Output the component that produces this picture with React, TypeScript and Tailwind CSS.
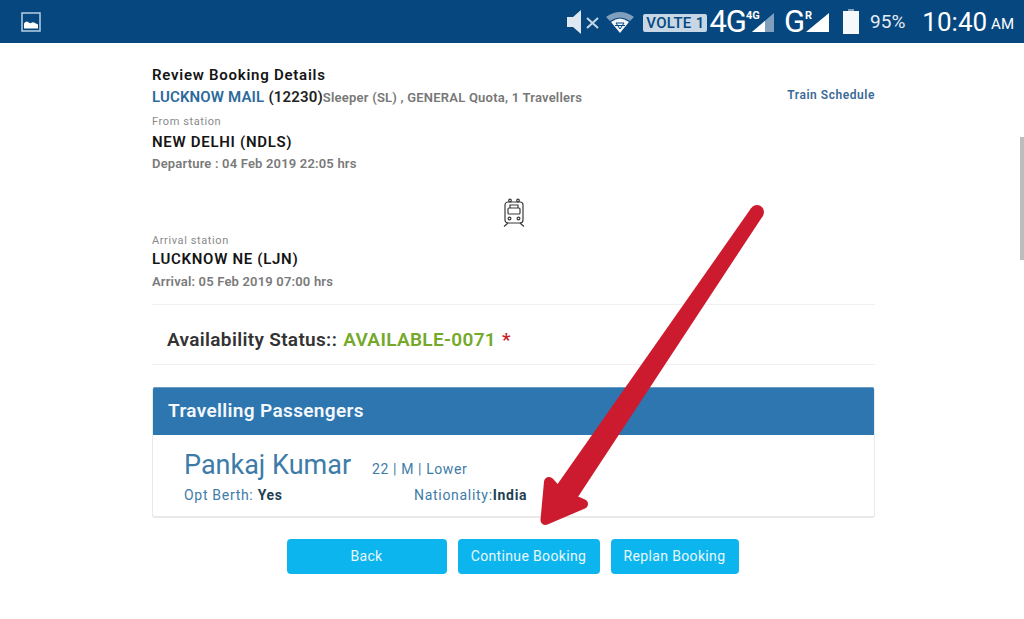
import React from "react"

const StatusBar = () => (
  <div className="h-[43px] bg-[#06477f] flex items-center text-white pl-[21px] pr-[10px]">
    <svg width="20" height="20" viewBox="0 0 20 20" className="mt-[1px]">
      <rect x="1" y="1" width="18" height="18" fill="none" stroke="#b9d0e4" strokeWidth="1.5" />
      <path d="M3 16.5 V11.5 Q5 8.5 7 10 Q8.5 11.5 10 11 Q12 9.5 14 11 L17 12.5 V16.5 Z" fill="#fff" />
    </svg>
    <div className="ml-auto flex items-center">
      <svg width="34" height="28" viewBox="0 0 34 28">
        <path d="M1 9 H7 L15 2 V26 L7 19 H1 Z" fill="#dfe8f0" />
        <path d="M21 10 L32 20 M32 10 L21 20" stroke="#c6d6e4" strokeWidth="2" />
      </svg>
      <svg width="30" height="24" viewBox="0 0 30 24" className="ml-[5px]">
        <path d="M1 7 Q15 -3 29 7 L25 11 Q15 4 5 11 Z" fill="#7f9fbd" />
        <path d="M6 12 Q15 5 24 12 L15 23 Z" fill="#f2f6f9" />
        <path d="M11 13 H19 L15 19 Z M10 15.5 H20" fill="none" stroke="#06477f" strokeWidth="1" />
      </svg>
      <span className="ml-[8px] h-[18px] w-[64px] mt-[3px] text-center bg-[#c7d7e6] text-[#06477f] rounded-[2px] text-[15px] leading-[18px] font-medium tracking-[0.3px] whitespace-nowrap">VOLTE 1</span>
      <span className="ml-[2px] text-[31px] leading-none tracking-[-1px]">4G</span>
      <span className="relative w-[28px] h-[24px]">
        <svg width="28" height="24" viewBox="0 0 28 24" className="absolute left-0 top-0">
          <path d="M28 3 V22 H6 Z" fill="#7f9fbd" />
          <path d="M19 11 V22 H6 Z" fill="#fff" />
        </svg>
        <span className="absolute left-0 top-0 text-[11px] leading-none font-bold">4G</span>
      </span>
      <span className="ml-[10px] text-[31px] leading-none">G</span>
      <span className="relative w-[25px] h-[24px]">
        <svg width="25" height="24" viewBox="0 0 25 24" className="absolute left-0 top-0">
          <path d="M24 3 V22 H1 Z" fill="#fff" />
        </svg>
        <span className="absolute left-0 top-0 text-[11px] leading-none font-bold">R</span>
      </span>
      <svg width="16" height="25" viewBox="0 0 16 25" className="ml-[13px]">
        <rect x="5" y="0" width="6" height="3" fill="#7f9fbd" />
        <rect x="0" y="2" width="16" height="23" fill="#f6f9fb" />
      </svg>
      <span className="ml-[11px] text-[19px] leading-none text-[#e6edf3]">95%</span>
      <span className="ml-[17px] text-[26px] leading-none">10:40</span>
      <span className="ml-[4px] text-[15px] leading-none mt-[5px]">AM</span>
    </div>
  </div>
)

const TrainIcon = () => (
  <svg width="22" height="30" viewBox="0 0 22 30" fill="none" stroke="#3a3a3a" strokeWidth="1.2">
    <rect x="2" y="4" width="18" height="21" rx="3" />
    <rect x="5" y="10" width="12" height="6" rx="1" />
    <path d="M7 10 L7 7 H15 L15 10" />
    <circle cx="7" cy="2.5" r="1.3" />
    <circle cx="15" cy="2.5" r="1.3" />
    <circle cx="6.5" cy="20.5" r="1.4" />
    <circle cx="15.5" cy="20.5" r="1.4" />
    <path d="M5 25 L1 28.5 M17 25 L21 28.5" />
  </svg>
)

const ActionButton = ({ label, width }: { label: string; width: string }) => (
  <button className={`h-[35px] ${width} rounded-[4px] bg-[#0cb5ee] text-[#e8f8fe] text-[14px] tracking-[0.35px]`}>
    {label}
  </button>
)

export default function App() {
  return (
    <div className="relative w-[1024px] h-[619px] overflow-hidden bg-white font-['Roboto',sans-serif]">
      <StatusBar />

      <main className="w-[723px] ml-[152px]">
        <div className="flex justify-between pt-[23px]">
          <div>
            <h1 className="text-[15px] leading-[18px] font-semibold text-[#151515] tracking-[0.75px]">Review Booking Details</h1>
            <p className="mt-[3px] leading-[20px] font-semibold tracking-[0.15px]">
              <span className="text-[15px] text-[#2c6a9c]">LUCKNOW MAIL</span>{" "}
              <span className="text-[15px] text-[#222]">(12230)</span>
              <span className="text-[13px] text-[#777] tracking-[0.22px]">Sleeper (SL) , GENERAL Quota, 1 Travellers</span>
            </p>
          </div>
          <a className="mt-[21px] text-[12px] leading-[16px] font-semibold text-[#3a6a96] tracking-[0.55px]">Train Schedule</a>
        </div>

        <p className="mt-[7px] text-[11px] leading-[14px] text-[#8a8a8a] tracking-[0.6px]">From station</p>
        <p className="mt-[4px] text-[15px] leading-[18px] font-semibold text-[#151515] tracking-[0.7px]">NEW DELHI (NDLS)</p>
        <p className="mt-[5px] text-[13px] leading-[16px] font-semibold text-[#7a7a7a] tracking-[0.18px]">Departure : 04 Feb 2019 22:05 hrs</p>

        <div className="flex justify-center mt-[26px]">
          <TrainIcon />
        </div>

        <p className="mt-[6px] text-[11px] leading-[14px] text-[#8a8a8a] tracking-[0.6px]">Arrival station</p>
        <p className="mt-[2px] text-[15px] leading-[18px] font-semibold text-[#151515] tracking-[0.7px]">LUCKNOW NE (LJN)</p>
        <p className="mt-[6px] text-[13px] leading-[16px] font-semibold text-[#7a7a7a] tracking-[0.18px]">Arrival: 05 Feb 2019 07:00 hrs</p>

        <div className="mt-[14px] h-[61px] pt-[12px] border-y border-[#f0f0f0] flex items-center pl-[15px] text-[19px] font-semibold tracking-[0.33px] text-[#333]">
          <span>Availability Status::</span>
          <span className="ml-[6px] text-[#74a92a]">AVAILABLE-0071</span>
          <span className="ml-[6px] text-[#c8242c]">*</span>
        </div>

        <section className="mt-[22px] rounded-[3px] border-b-2 border-x border-[#e9e9e9] overflow-hidden">
          <div className="-mx-px h-[48px] bg-[#2e76b0] border-t border-[#6d9cc2] flex items-center pl-[16px] text-[19px] font-semibold tracking-[0.35px] text-[#f4f8fb]">
            Travelling Passengers
          </div>
          <div className="h-[81px] pl-[31px] pt-[12px] text-[#3d7ca8]">
            <div className="flex items-baseline">
              <span className="text-[27px] leading-[36px]">Pankaj Kumar</span>
              <span className="ml-[21px] text-[14px] tracking-[0.6px]">22 | M | Lower</span>
            </div>
            <div className="flex text-[14px] leading-[18px] tracking-[0.7px] mt-[3px]">
              <span className="w-[230px]">Opt Berth: <b className="font-bold text-[#1f3f55]">Yes</b></span>
              <span>Nationality:<b className="font-bold text-[#1f3f55]">India</b></span>
            </div>
          </div>
        </section>

        <div className="mt-[21px] flex justify-center gap-[11px] pr-[2px]">
          <ActionButton label="Back" width="w-[160px]" />
          <ActionButton label="Continue Booking" width="w-[142px]" />
          <ActionButton label="Replan Booking" width="w-[128px]" />
        </div>
      </main>

      {/* scrollbar */}
      <div className="absolute right-0 top-[137px] w-[4px] h-[123px] bg-[#bdbdbd]" />

      {/* annotation arrow */}
      <svg className="absolute left-0 top-0 pointer-events-none" width="1024" height="619" viewBox="0 0 1024 619">
        <circle cx="757" cy="212" r="7" fill="#cc1b2e" />
        <path d="M751.2 208.1 L552 492 L572 506 L762.8 215.9 Z" fill="#cc1b2e" />
        <path d="M549 482 L545.5 520 L583 504 L560 494 Z" fill="#cc1b2e" stroke="#cc1b2e" strokeWidth="10" strokeLinejoin="round" />
      </svg>
    </div>
  )
}
